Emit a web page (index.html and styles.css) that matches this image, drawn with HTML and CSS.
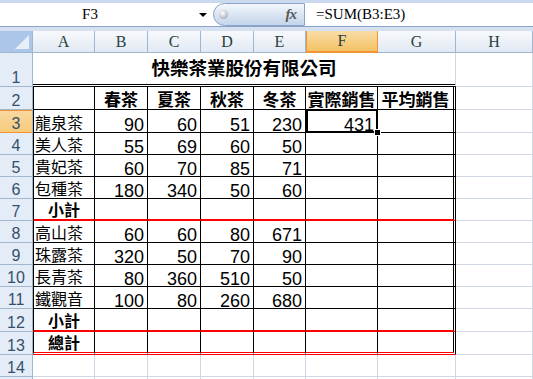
FILE: index.html
```html
<!DOCTYPE html>
<html>
  <head>
    <title>快樂茶業股份有限公司</title>
    <link rel="stylesheet" href="styles.css">
  </head>
  <body>
    <div class="formula-bar">
      <div class="name-box">
        <span class="name">F3</span>
        <span class="arrow"></span>
      </div>
      <div class="fx-button">
        <span class="knob"></span>
        <span class="fx">fx</span>
      </div>
      <div class="formula">=SUM(B3:E3)</div>
    </div>
    <div class="bar-gap"></div>

    <div class="sheet">
      <div class="corner">
        <svg width="14" height="14" viewBox="0 0 14 14"><polygon points="14,0 14,14 0,14" fill="#e8eff9"/></svg>
      </div>
      <div class="cell col">A</div>
      <div class="cell col">B</div>
      <div class="cell col">C</div>
      <div class="cell col">D</div>
      <div class="cell col">E</div>
      <div class="cell col active">F</div>
      <div class="cell col">G</div>
      <div class="cell col">H</div>

      <div class="cell row">1</div>
      <div class="cell title">快樂茶業股份有限公司</div>
      <div class="cell"></div>

      <div class="cell row">2</div>
      <div class="cell d first"></div>
      <div class="cell d hd">春茶</div>
      <div class="cell d hd">夏茶</div>
      <div class="cell d hd">秋茶</div>
      <div class="cell d hd">冬茶</div>
      <div class="cell d hd">實際銷售</div>
      <div class="cell d hd last">平均銷售</div>
      <div class="cell"></div>

      <div class="cell row active">3</div>
      <div class="cell d first name">龍泉茶</div>
      <div class="cell d num">90</div>
      <div class="cell d num">60</div>
      <div class="cell d num">51</div>
      <div class="cell d num">230</div>
      <div class="cell d num sel">431</div>
      <div class="cell d last"></div>
      <div class="cell"></div>

      <div class="cell row">4</div>
      <div class="cell d first name">美人茶</div>
      <div class="cell d num">55</div>
      <div class="cell d num">69</div>
      <div class="cell d num">60</div>
      <div class="cell d num">50</div>
      <div class="cell d"></div>
      <div class="cell d last"></div>
      <div class="cell"></div>

      <div class="cell row">5</div>
      <div class="cell d first name">貴妃茶</div>
      <div class="cell d num">60</div>
      <div class="cell d num">70</div>
      <div class="cell d num">85</div>
      <div class="cell d num">71</div>
      <div class="cell d"></div>
      <div class="cell d last"></div>
      <div class="cell"></div>

      <div class="cell row">6</div>
      <div class="cell d first name">包種茶</div>
      <div class="cell d num">180</div>
      <div class="cell d num">340</div>
      <div class="cell d num">50</div>
      <div class="cell d num">60</div>
      <div class="cell d"></div>
      <div class="cell d last"></div>
      <div class="cell"></div>

      <div class="cell row">7</div>
      <div class="cell d first sub sum">小計</div>
      <div class="cell d sub"></div>
      <div class="cell d sub"></div>
      <div class="cell d sub"></div>
      <div class="cell d sub"></div>
      <div class="cell d sub"></div>
      <div class="cell d sub last"></div>
      <div class="cell"></div>

      <div class="cell row">8</div>
      <div class="cell d first name">高山茶</div>
      <div class="cell d num">60</div>
      <div class="cell d num">60</div>
      <div class="cell d num">80</div>
      <div class="cell d num">671</div>
      <div class="cell d"></div>
      <div class="cell d last"></div>
      <div class="cell"></div>

      <div class="cell row">9</div>
      <div class="cell d first name">珠露茶</div>
      <div class="cell d num">320</div>
      <div class="cell d num">50</div>
      <div class="cell d num">70</div>
      <div class="cell d num">90</div>
      <div class="cell d"></div>
      <div class="cell d last"></div>
      <div class="cell"></div>

      <div class="cell row">10</div>
      <div class="cell d first name">長青茶</div>
      <div class="cell d num">80</div>
      <div class="cell d num">360</div>
      <div class="cell d num">510</div>
      <div class="cell d num">50</div>
      <div class="cell d"></div>
      <div class="cell d last"></div>
      <div class="cell"></div>

      <div class="cell row">11</div>
      <div class="cell d first name">鐵觀音</div>
      <div class="cell d num">100</div>
      <div class="cell d num">80</div>
      <div class="cell d num">260</div>
      <div class="cell d num">680</div>
      <div class="cell d"></div>
      <div class="cell d last"></div>
      <div class="cell"></div>

      <div class="cell row">12</div>
      <div class="cell d first sub sum">小計</div>
      <div class="cell d sub"></div>
      <div class="cell d sub"></div>
      <div class="cell d sub"></div>
      <div class="cell d sub"></div>
      <div class="cell d sub"></div>
      <div class="cell d sub last"></div>
      <div class="cell"></div>

      <div class="cell row">13</div>
      <div class="cell d first total sum">總計</div>
      <div class="cell d total"></div>
      <div class="cell d total"></div>
      <div class="cell d total"></div>
      <div class="cell d total"></div>
      <div class="cell d total"></div>
      <div class="cell d total last"></div>
      <div class="cell"></div>

      <div class="cell row">14</div>
      <div class="cell"></div>
      <div class="cell"></div>
      <div class="cell"></div>
      <div class="cell"></div>
      <div class="cell"></div>
      <div class="cell"></div>
      <div class="cell"></div>
      <div class="cell"></div>

      <div class="row-edge"></div>
      <div class="blank"></div>
      <div class="blank"></div>
      <div class="blank"></div>
      <div class="blank"></div>
      <div class="blank"></div>
      <div class="blank"></div>
      <div class="blank"></div>
      <div class="blank"></div>
    </div>
  </body>
</html>
```

FILE: styles.css
```css
body {
  margin: 0;
  background: #fff;
  overflow: hidden;
  font-family: "Liberation Sans", "Noto Sans CJK TC", sans-serif;
  color: #000;
}

/* formula bar */

.formula-bar {
  display: flex;
  height: 23px;
  border-top: 3px solid #cad9ed;
  border-bottom: 1px solid #8ba5c9;
  background: #fff;
}

.name-box {
  width: 213px;
  display: flex;
  align-items: center;
}

.name-box .name {
  flex: 1;
  text-align: center;
  padding-right: 20px;
  font: 15px "Liberation Serif", serif;
}

.arrow {
  width: 0;
  height: 0;
  border-left: 4px solid transparent;
  border-right: 4px solid transparent;
  border-top: 4px solid #000;
  margin-right: 6px;
}

.fx-button {
  width: 92px;
  box-sizing: border-box;
  display: flex;
  align-items: center;
  justify-content: space-between;
  padding: 0 5px 0 5px;
  border: 1px solid #8aa4c7;
  border-radius: 12px 0 0 12px;
  background: linear-gradient(#f5f8fc, #dae5f3 50%, #c5d5eb);
}

.knob {
  width: 9px;
  height: 9px;
  border-radius: 50%;
  background: radial-gradient(circle at 40% 35%, #fff, #bcc1c8 60%, #8f959e);
}

.fx {
  font: italic bold 15px "Liberation Serif", serif;
  color: #5a5a5a;
  letter-spacing: -1px;
  padding-right: 3px;
}

.formula {
  flex: 1;
  padding-left: 11px;
  font: 15px/23px "Liberation Serif", serif;
}

.bar-gap {
  height: 4px;
  background: #d5e1f0;
}

/* sheet grid */

.sheet {
  display: grid;
  grid-template-columns: 33px 62px 53px 53px 53px 52px 72px 78px 77px;
  grid-template-rows: 22px 34px 23px 23px 22px 22px 22px 22px 22px 22px 22px 22px 23px 23px 22px 2px;
}

.cell {
  box-sizing: border-box;
  display: flex;
  align-items: flex-end;
  border-right: 1px solid #d0d7e5;
  border-bottom: 1px solid #d0d7e5;
  white-space: nowrap;
}

.row-edge {
  background: #e4ecf7;
  border-right: 1px solid #9eb6ce;
}

.blank {
  border-right: 1px solid #d0d7e5;
}

.corner {
  display: flex;
  align-items: flex-end;
  justify-content: flex-end;
  padding: 0 3px 3px 0;
  background: #abc6e8;
  border-right: 1px solid #9eb6ce;
  border-bottom: 1px solid #9eb6ce;
}

.col {
  align-items: center;
  justify-content: center;
  background: linear-gradient(#f7f9fc, #e2e9f3);
  border-color: #9eb6ce;
  font: 16px "Liberation Serif", serif;
  color: #27413e;
}

.col.active {
  background: linear-gradient(#f9dca6, #f2c264);
  border-color: #f29436;
  border-left: 1px solid #f29436;
  border-bottom-width: 2px;
}

.row {
  justify-content: center;
  background: #e4ecf7;
  border-color: #9eb6ce;
  font-size: 16px;
  line-height: 16px;
  color: #34506c;
}

.row.active {
  background: linear-gradient(#f9d9a0, #f6cb7c);
  border-bottom-color: #f29436;
  box-shadow: inset 0 1px #f29436;
}

.title {
  grid-column: span 7;
  justify-content: center;
  padding-bottom: 6px;
  border-bottom: 3px double #000;
  font: 700 18.5px/22px "Noto Sans CJK TC", sans-serif;
}

/* data area */

.d {
  border-right-color: #000;
  border-bottom-color: #000;
}

.d.first {
  border-left: 1px solid #000;
}

.d.last {
  border-right: 3px double #000;
}

.d.sub {
  border-bottom: 2px solid #f00;
}

.d.total {
  border-bottom: 3px double #f00;
}

.name {
  padding-left: 1px;
  font: 16px/19px "Noto Sans CJK TC", sans-serif;
}

.num {
  justify-content: flex-end;
  padding-right: 3px;
  font-size: 18px;
  line-height: 14px;
}

.hd {
  justify-content: center;
  font: 700 17px/20px "Noto Sans CJK TC", sans-serif;
}

.sum {
  justify-content: center;
  font: 700 16px/19px "Noto Sans CJK TC", sans-serif;
}

.sel {
  position: relative;
}

.sel::after {
  content: "";
  position: absolute;
  left: 0;
  top: -1px;
  right: -1px;
  bottom: -1px;
  border: 2px solid #000;
}

.sel::before {
  content: "";
  position: absolute;
  right: -4px;
  bottom: -4px;
  width: 5px;
  height: 5px;
  background: #000;
  border: 1px solid #fff;
  z-index: 1;
}
```
